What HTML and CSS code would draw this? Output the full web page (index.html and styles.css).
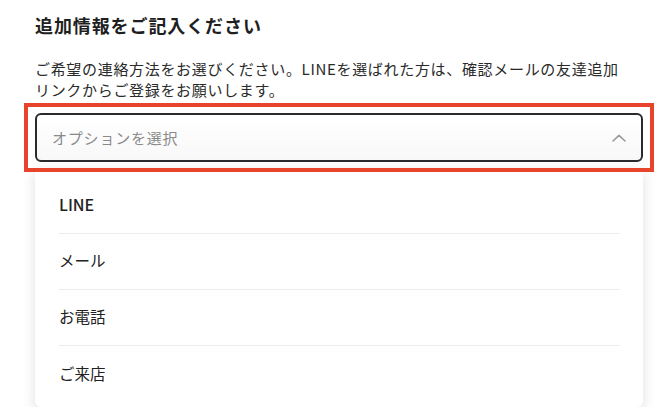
FILE: index.html
```html
<!DOCTYPE html>
<html lang="ja">
<head>
<meta charset="utf-8">
<link rel="stylesheet" href="styles.css">
</head>
<body>
<div class="form">
  <h2 class="title">追加情報をご記入ください</h2>
  <p class="desc">ご希望の連絡方法をお選びください。LINEを選ばれた方は、確認メールの友達追加<br>リンクからご登録をお願いします。</p>
  <div class="highlight">
    <div class="select">
      <span class="placeholder">オプションを選択</span>
      <svg class="chev" width="14" height="8" viewBox="0 0 14 8"><path d="M1 7 L7 1.3 L13 7" fill="none" stroke="#9a9a9a" stroke-width="1.6" stroke-linecap="round" stroke-linejoin="round"/></svg>
    </div>
  </div>
  <ul class="menu">
    <li class="opt latin">LINE</li>
    <li class="opt">メール</li>
    <li class="opt">お電話</li>
    <li class="opt">ご来店</li>
  </ul>
</div>
</body>
</html>
```

FILE: styles.css
```css
html, body {
  margin: 0;
  padding: 0;
  background: #ffffff;
}
body {
  font-family: "Noto Sans CJK JP", "Noto Sans", sans-serif;
  color: #222;
  overflow: hidden;
}
.form {
  width: 608px;
  padding: 12px 0 0 35px;
}
.title {
  margin: 0;
  font-size: 18px;
  line-height: 26px;
  font-weight: 600;
  letter-spacing: 0.9px;
  color: #1f1f1f;
}
.desc {
  margin: 20px 0 0;
  font-size: 15px;
  line-height: 21px;
  letter-spacing: 0.68px;
  color: #2a2a2a;
  white-space: nowrap;
}
.highlight {
  position: relative;
  z-index: 2;
  margin-top: 13px;
}
.highlight::after {
  content: "";
  position: absolute;
  left: -11px;
  right: -11px;
  top: -10px;
  bottom: -10px;
  border: 4px solid #e8432b;
  pointer-events: none;
}
.select {
  height: 45px;
  border: 2px solid #2a2a2e;
  border-radius: 6px;
  background: linear-gradient(#ffffff, #f8f8f8);
  display: flex;
  align-items: center;
  justify-content: space-between;
  padding: 0 15px 0 15px;
}
.placeholder {
  font-size: 15px;
  letter-spacing: 0.8px;
  color: #8a8a8a;
}
.chev {
  display: block;
}
.menu {
  list-style: none;
  margin: 6px 0 0;
  padding: 10px 23px 5px 24px;
  background: #fff;
  border-radius: 0 0 6px 6px;
  box-shadow: 0 4px 14px rgba(0, 0, 0, 0.13);
  position: relative;
  z-index: 1;
}
.opt {
  height: 56px;
  display: flex;
  align-items: center;
  padding-bottom: 3px;
  font-size: 15.5px;
  color: #222;
  border-bottom: 1px solid #ececec;
  box-sizing: border-box;
}
.opt:last-child {
  border-bottom: none;
}
.latin {
  font-weight: 500;
  font-size: 16px;
}
```
